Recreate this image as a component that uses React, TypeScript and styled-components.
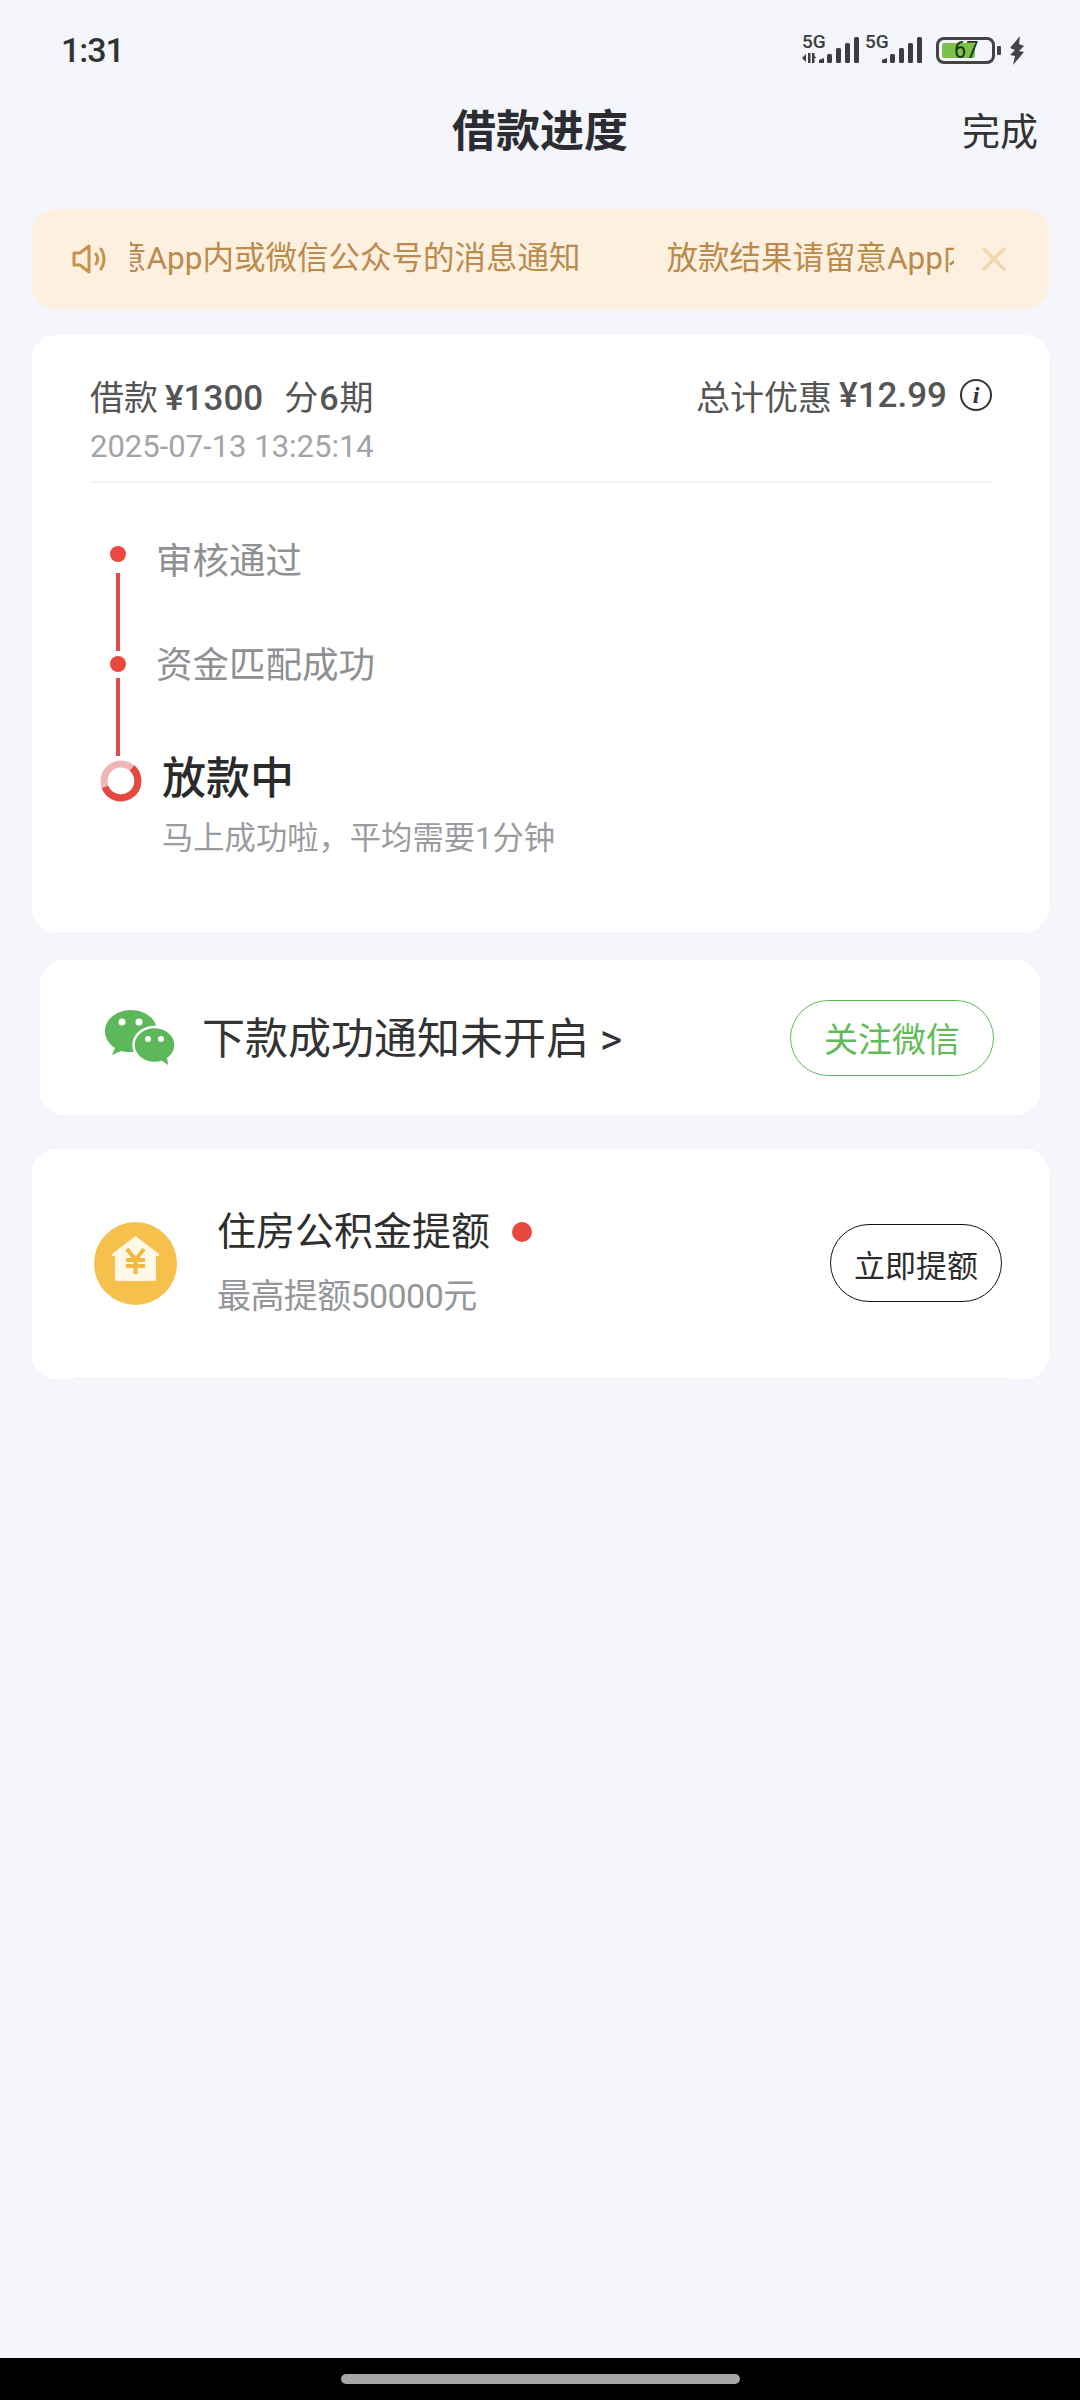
import React, { FC } from 'react';
import styled, { createGlobalStyle } from 'styled-components';

const GlobalStyle = createGlobalStyle`
    * {
        box-sizing: border-box;
    }
    html, body {
        margin: 0;
        padding: 0;
        background: #f4f6fb;
    }
    body {
        font-family: Roboto, "Noto Sans CJK SC", sans-serif;
    }
`

const Page = styled.div`
    width: 1080px;
    height: 2400px;
    display: flex;
    flex-direction: column;
    background: #f4f6fb;
    overflow: hidden;
`

const Main = styled.main`
    flex: 1;
    display: flex;
    flex-direction: column;
`

const StatusBar = styled.div`
    height: 100px;
    display: flex;
    align-items: center;
    justify-content: space-between;
    padding: 0 55px 0 61px;
`

const Time = styled.span`
    font-size: 34px;
    font-weight: 500;
    color: #333;
    letter-spacing: -1px;
`

const StatusIcons = styled.div`
    display: flex;
    align-items: center;
    gap: 6px;
`

const Battery = styled.div`
    position: relative;
    width: 59px;
    height: 27px;
    margin-left: 8px;
    border: 3px solid #444;
    border-radius: 8px;
    padding: 3px;
    &::after {
        content: '';
        position: absolute;
        right: -9px;
        top: 6px;
        width: 4px;
        height: 9px;
        background: #444;
        border-radius: 1px;
    }
`

const BatteryFill = styled.div`
    height: 100%;
    background: #7ac24a;
    border-radius: 2px;
`

const BatteryText = styled.span`
    position: absolute;
    left: 15px;
    top: -4px;
    font-size: 24px;
    line-height: 28px;
    color: #1c3312;
    transform: scaleX(0.9);
    transform-origin: left;
`

const Header = styled.header`
    height: 64px;
    margin-bottom: 45px;
    padding: 0 42px;
    display: grid;
    grid-template-columns: 1fr auto 1fr;
    align-items: center;
`

const Title = styled.h1`
    grid-column: 2;
    margin: 0;
    font-size: 44px;
    line-height: 44px;
    font-weight: 700;
    color: #2b2d33;
`

const Done = styled.span`
    justify-self: end;
    font-size: 38px;
    line-height: 44px;
    color: #333;
`

const Notice = styled.div`
    height: 100px;
    margin: 0 31px 26px 32px;
    padding: 0 43px 0 40px;
    display: flex;
    align-items: center;
    background: #fdf0df;
    border-radius: 24px;
`

const Marquee = styled.div`
    flex: 1;
    margin: 0 28px 0 22px;
    overflow: hidden;
    white-space: nowrap;
`

const MarqueeTrack = styled.div`
    display: inline-flex;
    gap: 86px;
    margin-left: -204px;
    font-size: 31.5px;
    line-height: 40px;
    color: #bb8a4d;
`

const Card = styled.section<{ $inset?: number }>`
    margin: 0 ${({ $inset }) => $inset ?? 31}px 0 ${({ $inset }) => $inset ?? 32}px;
    background: #fff;
    border-radius: 24px;
`

const LoanCard = styled(Card)`
    height: 597px;
    margin-bottom: 28px;
    padding: 35px 57px 0 58px;
`

const SummaryRow = styled.div`
    display: flex;
    justify-content: space-between;
    align-items: center;
    height: 50px;
    font-size: 34px;
    color: #555;
`

const Amount = styled.span<{ $after?: number }>`
    display: inline-block;
    margin: 0 ${({ $after }) => $after ?? 0}px 0 7px;
    font-size: 35px;
    font-weight: 500;
`

const PeriodNum = styled.span`
    margin: 0 1px;
    font-size: 34px;
    font-weight: 500;
`

const SummaryRight = styled.div`
    display: flex;
    align-items: center;
`

const InfoBadge = styled.span`
    width: 32px;
    height: 32px;
    margin-left: 13px;
    border: 2px solid #333;
    border-radius: 50%;
    display: flex;
    align-items: center;
    justify-content: center;
    font-family: "Liberation Serif", serif;
    font-style: italic;
    font-weight: 700;
    font-size: 24px;
    color: #333;
`

const DateText = styled.div`
    margin-top: 6px;
    font-size: 31px;
    line-height: 42px;
    color: #a3a4a8;
    padding-bottom: 13px;
    border-bottom: 2px solid #f3f3f5;
`

const Timeline = styled.div`
    margin-top: 63px;
    padding-left: 20px;
`

const Step = styled.div`
    display: flex;
    height: 110px;
`

const Rail = styled.div`
    width: 16px;
    display: flex;
    flex-direction: column;
    align-items: center;
`

const Dot = styled.span`
    width: 16px;
    height: 16px;
    border-radius: 50%;
    background: #e8483f;
`

const RailLine = styled.span<{ $gap?: number }>`
    width: 4px;
    height: 78px;
    margin-top: ${({ $gap }) => $gap ?? 11}px;
    background: #dd4f4a;
`

const StepLabel = styled.span<{ $lift: number }>`
    margin: ${({ $lift }) => -$lift}px 0 0 30px;
    font-size: 36.5px;
    line-height: 36px;
    color: #8f9094;
`

const ActiveStep = styled.div`
    display: flex;
    margin: -6px 0 0 -10px;
`

const ActiveBody = styled.div`
    margin-left: 20px;
    display: flex;
    flex-direction: column;
`

const ActiveTitle = styled.div`
    margin-top: -3px;
    font-size: 44px;
    line-height: 44px;
    font-weight: 500;
    color: #2a2a2a;
`

const ActiveDesc = styled.div`
    margin-top: 18px;
    font-size: 31.3px;
    line-height: 40px;
    color: #9a9b9f;
`

const WechatCard = styled(Card)`
    height: 155px;
    margin-bottom: 34px;
    padding: 0 46px 0 65px;
    display: flex;
    align-items: center;
`

const WechatText = styled.span`
    flex: 1;
    margin: -6px 0 0 26px;
    font-size: 43px;
    color: #333;
`

const FollowButton = styled.span`
    width: 204px;
    height: 76px;
    border: 1.5px solid #62b95c;
    border-radius: 38px;
    display: flex;
    align-items: center;
    justify-content: center;
    font-size: 34px;
    color: #62bb5b;
`

const QuotaCard = styled(Card)`
    position: relative;
    height: 230px;
    padding: 0 47px 2px 62px;
    display: flex;
    align-items: center;
    &::after {
        content: '';
        position: absolute;
        left: 43px;
        right: 43px;
        bottom: -5px;
        height: 5px;
        background: #f8f8fa;
        border-top: 1px solid #efeff1;
    }
`

const QuotaBody = styled.div`
    flex: 1;
    margin: 2px 0 0 40px;
`

const QuotaTitleRow = styled.div`
    display: flex;
    align-items: center;
    font-size: 39px;
    line-height: 50px;
    color: #2f2f2f;
`

const RedDot = styled.span`
    width: 20px;
    height: 20px;
    margin-left: 22px;
    border-radius: 50%;
    background: #e8483f;
`

const QuotaDesc = styled.div`
    margin-top: 14px;
    font-size: 34px;
    line-height: 50px;
    letter-spacing: -0.6px;
    color: #95969a;
`

const RaiseButton = styled.span`
    width: 172px;
    height: 78px;
    border: 1.5px solid #111;
    border-radius: 39px;
    display: flex;
    align-items: center;
    justify-content: center;
    font-size: 31px;
    color: #2b2b2b;
`

const NavBar = styled.div`
    height: 42px;
    background: #000;
    display: flex;
    justify-content: center;
    padding-top: 16px;
`

const NavHandle = styled.span`
    width: 399px;
    height: 10px;
    border-radius: 5px;
    background: #a6a6a6;
`

const SignalIcon: FC<{ arrows?: boolean }> = ({ arrows }) => (
    <svg width="57" height="40" viewBox="0 0 57 40">
        <text x="0" y="18" fontFamily="Roboto, sans-serif" fontSize="19" fontWeight="500" fill="#3d3d3d">5G</text>
        {arrows && <path d="M0 28l4-4v8zM6 23h2.500v10H6zM10 23h2.500v10H10zM12.500 26l2 2-2 0z" fill="#3d3d3d" />}
        <path d="M17 33v-3l5-2v5z" fill="#3d3d3d" />
        <rect x="25" y="24" width="5" height="9" rx="1.500" fill="#3d3d3d" />
        <rect x="34" y="18" width="5" height="15" rx="1.500" fill="#3d3d3d" />
        <rect x="43" y="13" width="5" height="20" rx="1.500" fill="#3d3d3d" />
        <rect x="52" y="7" width="5" height="26" rx="1.500" fill="#3d3d3d" />
    </svg>
)

const BoltIcon: FC = () => (
    <svg width="16" height="29" viewBox="0 0 16 29" style={{ marginLeft: 8 }}>
        <path d="M11 0L1 12l5 2-5 5 5 1-2 9 11-13-5-1 5-5-5-2z" fill="#444" />
    </svg>
)

const SpeakerIcon: FC = () => (
    <svg width="36" height="30" viewBox="0 0 36 30" fill="none" stroke="#c9914f" strokeWidth="3">
        <path d="M2 9h6l9-7v26l-9-7H2z" strokeLinejoin="round" />
        <path d="M24 10c2 3 2 7 0 10" strokeLinecap="round" />
        <path d="M29 5c4 6 4 14 0 20" strokeLinecap="round" />
    </svg>
)

const CloseIcon: FC = () => (
    <svg width="24" height="24" viewBox="0 0 24 24" fill="none" stroke="#f3d5ae" strokeWidth="3.500" strokeLinecap="round">
        <path d="M2 2l20 20M22 2L2 22" />
    </svg>
)

const ProgressRing: FC = () => (
    <svg width="42" height="42" viewBox="0 0 42 42" fill="none" strokeWidth="7" style={{ flexShrink: 0 }}>
        <circle cx="21" cy="21" r="17" stroke="#f0b6b5" />
        <path d="M32 8a17 17 0 1 1-27 19" stroke="#e4483f" />
    </svg>
)

const WechatIcon: FC = () => (
    <svg width="71" height="55" viewBox="0 0 71 55">
        <path d="M26 0C12 0 0 9 0 21c0 7 4 13 10 17l-3 7 9-4c3 1 6 1 10 1 14 0 26-9 26-21S40 0 26 0z" fill="#5cb85a" />
        <ellipse cx="49.500" cy="35" rx="21" ry="18" fill="#5cb85a" stroke="#fff" strokeWidth="2.500" />
        <path d="M56 50l7 5-1-8z" fill="#5cb85a" />
        <circle cx="17" cy="12" r="3.500" fill="#fff" />
        <circle cx="34" cy="12" r="3.500" fill="#fff" />
        <circle cx="43" cy="29" r="3" fill="#fff" />
        <circle cx="56" cy="29" r="3" fill="#fff" />
    </svg>
)

const HouseIcon: FC = () => (
    <svg width="83" height="83" viewBox="0 0 83 83" style={{ flexShrink: 0 }}>
        <circle cx="41.500" cy="41.500" r="41.500" fill="#f6c04c" />
        <path d="M41.500 14L65 32v2h-3v23a2 2 0 0 1-2 2H23a2 2 0 0 1-2-2V34h-3v-2z" fill="#fff7e8" />
        <path d="M33 27l8.500 11L50 27M32 38h19M32 44h19M41.500 38v14" fill="none" stroke="#f3b83f" strokeWidth="4" />
    </svg>
)

const noticeText = '放款结果请留意App内或微信公众号的消息通知';

const App: FC = () => {
    return (
        <Page>
            <GlobalStyle />
            <Main>
                <StatusBar>
                    <Time>1:31</Time>
                    <StatusIcons>
                        <SignalIcon arrows />
                        <SignalIcon />
                        <Battery>
                            <BatteryFill style={{ width: '70%' }} />
                            <BatteryText>67</BatteryText>
                        </Battery>
                        <BoltIcon />
                    </StatusIcons>
                </StatusBar>
                <Header>
                    <Title>借款进度</Title>
                    <Done>完成</Done>
                </Header>
                <Notice>
                    <SpeakerIcon />
                    <Marquee>
                        <MarqueeTrack>
                            <span>{noticeText}</span>
                            <span>{noticeText}</span>
                        </MarqueeTrack>
                    </Marquee>
                    <CloseIcon />
                </Notice>
                <LoanCard>
                    <SummaryRow>
                        <span>
                            借款<Amount $after={21}>¥1300</Amount>分<PeriodNum>6</PeriodNum>期
                        </span>
                        <SummaryRight>
                            总计优惠<Amount>¥12.99</Amount>
                            <InfoBadge>i</InfoBadge>
                        </SummaryRight>
                    </SummaryRow>
                    <DateText>2025-07-13 13:25:14</DateText>
                    <Timeline>
                        <Step>
                            <Rail>
                                <Dot />
                                <RailLine />
                            </Rail>
                            <StepLabel $lift={2}>审核通过</StepLabel>
                        </Step>
                        <Step>
                            <Rail>
                                <Dot />
                                <RailLine $gap={6} />
                            </Rail>
                            <StepLabel $lift={8}>资金匹配成功</StepLabel>
                        </Step>
                        <ActiveStep>
                            <ProgressRing />
                            <ActiveBody>
                                <ActiveTitle>放款中</ActiveTitle>
                                <ActiveDesc>马上成功啦，平均需要1分钟</ActiveDesc>
                            </ActiveBody>
                        </ActiveStep>
                    </Timeline>
                </LoanCard>
                <WechatCard $inset={40}>
                    <WechatIcon />
                    <WechatText>下款成功通知未开启 &gt;</WechatText>
                    <FollowButton>关注微信</FollowButton>
                </WechatCard>
                <QuotaCard>
                    <HouseIcon />
                    <QuotaBody>
                        <QuotaTitleRow>
                            住房公积金提额
                            <RedDot />
                        </QuotaTitleRow>
                        <QuotaDesc>最高提额50000元</QuotaDesc>
                    </QuotaBody>
                    <RaiseButton>立即提额</RaiseButton>
                </QuotaCard>
            </Main>
            <NavBar>
                <NavHandle />
            </NavBar>
        </Page>
    )
}

export default App;
